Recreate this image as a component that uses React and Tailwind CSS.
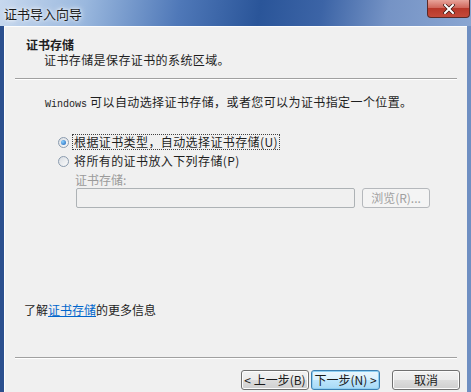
import React from "react";

const cjk = { fontFamily: '"Noto Sans CJK SC", "Noto Sans", sans-serif' };

const Button = ({ children, focused, disabled, className = "" }) => (
  <div
    className={`flex items-center justify-center h-[20px] rounded-[3px] border text-[12px] leading-none ${
      disabled
        ? "border-[#b5b8bc] bg-[#f4f4f4] text-[#a0a0a0]"
        : focused
        ? "border-[#3c7fb1] bg-[linear-gradient(#eaf6fd,#d9f0fc_50%,#bee6fd_50%,#a7d9f5)] text-[#1a1a1a] shadow-[inset_0_0_0_1px_#8fd0f3]"
        : "border-[#707070] bg-[linear-gradient(#f2f2f2,#ebebeb_50%,#dddddd_50%,#cfcfcf)] text-[#1a1a1a] shadow-[inset_0_0_0_1px_#fcfcfc]"
    } ${className}`}
  >
    {children}
  </div>
);

const Radio = ({ checked }) => (
  <div className="w-[11px] h-[11px] rounded-full border border-[#8a9bae] bg-[linear-gradient(135deg,#d8dde3,#fbfbfb)] flex items-center justify-center">
    {checked && (
      <div className="w-[5px] h-[5px] rounded-full bg-[radial-gradient(circle_at_35%_35%,#8ad0ff,#1a5fb4)]" />
    )}
  </div>
);

export default function App() {
  return (
    <div
      className="w-[471px] h-[392px] overflow-hidden flex flex-col bg-[linear-gradient(90deg,#2b4f8e_0px,#2b4f8e_4px,#6f8fc2_4px,#6f8fc2_100%)]"
      style={cjk}
    >
      <div className="relative h-[26px] shrink-0 bg-[linear-gradient(100deg,#c7d8ee_0%,#9ab8de_18%,#4f78b8_38%,#2a5599_55%,#3c64a6_68%,#7593c5_82%,#8aa6d2_100%)]">
        <span className="absolute left-[4px] top-[4px] text-[13px] text-[#1c1c1c] [text-shadow:0_0_6px_#ffffff,0_0_3px_#ffffff]">
          证书导入向导
        </span>
        <div className="absolute right-[1px] top-0 w-[43px] h-[18px] rounded-b-[4px] border border-t-0 border-[#5a2a28] bg-[linear-gradient(#e8a49a,#d0685c_45%,#b8382a_50%,#c44a3a)] flex items-center justify-center">
          <svg width="12" height="10" viewBox="0 0 12 10">
            <path d="M2 1 L10 9 M10 1 L2 9" stroke="#3b1510" strokeWidth="3.4" strokeLinecap="square" />
            <path d="M2 1 L10 9 M10 1 L2 9" stroke="#ffffff" strokeWidth="2" strokeLinecap="square" />
          </svg>
        </div>
      </div>

      <div className="flex-1 ml-[4px] mr-[4px] bg-[#f0f0f0] border-l border-t border-[#fdfdfd] flex flex-col text-[12px] text-[#1e1e1e]">
        <div className="pt-[11px] pl-[21px]">
          <div className="font-bold leading-[14px]">证书存储</div>
          <div className="pl-[18px] pt-[1px] leading-[14px] tracking-[0.4px]">
            证书存储是保存证书的系统区域。
          </div>
        </div>
        <div className="mt-[11px] mx-[10px] h-[2px] border-t border-[#a0a0a0] border-b border-b-[#ffffff]" />

        <div className="pl-[40px] pt-[15px] leading-[14px] tracking-[0.4px]">
          <span style={{ fontFamily: '"Liberation Mono", monospace' }} className="text-[10px] tracking-normal">
            Windows
          </span>{" "}
          可以自动选择证书存储，或者您可以为证书指定一个位置。
        </div>

        <div className="pl-[53px] pt-[23px] flex flex-col gap-[5px]">
          <div className="flex items-center gap-[4px] h-[14px]">
            <Radio checked />
            <span className="outline outline-1 outline-dotted outline-[#404040] leading-[14px] px-[1px] tracking-[0.4px]">
              根据证书类型，自动选择证书存储(U)
            </span>
          </div>
          <div className="flex items-center gap-[4px] h-[14px]">
            <Radio />
            <span className="leading-[14px] px-[1px] tracking-[0.4px]">将所有的证书放入下列存储(P)</span>
          </div>
        </div>
        <div className="pl-[70px] pt-[5px] text-[#9a9a9a] leading-[14px]">证书存储:</div>
        <div className="pl-[71px] pt-[1px] flex items-center">
          <div className="w-[279px] h-[20px] border border-[#adb2b5] bg-[#f0f0f0] rounded-[2px]" />
          <Button disabled className="ml-[7px] w-[68px]">
            浏览(R)...
          </Button>
        </div>

        <div className="flex-1" />

        <div className="pl-[19px] leading-[14px] mb-[40px]">
          了解<span className="text-[#0066cc] underline">证书存储</span>的更多信息
        </div>
        <div className="mx-[10px] h-[2px] border-t border-[#a0a0a0] border-b border-b-[#ffffff]" />
        <div className="flex justify-end items-center pr-[7px] pt-[11px] pb-[2px]">
          <Button className="w-[68px]">&lt; 上一步(B)</Button>
          <Button focused className="w-[69px] ml-[2px]">下一步(N) &gt;</Button>
          <Button className="w-[68px] ml-[12px]">取消</Button>
        </div>
      </div>
    </div>
  );
}
